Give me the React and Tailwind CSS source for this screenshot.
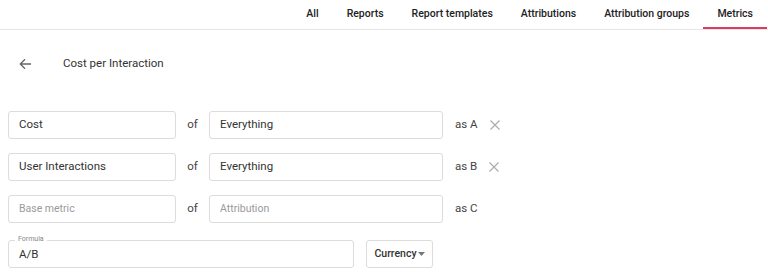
import { useState } from 'react';

const tabs = ['All', 'Reports', 'Report templates', 'Attributions', 'Attribution groups', 'Metrics'];

function CloseIcon() {
  return (
    <svg width="10" height="10" viewBox="0 0 10 10" className="text-[#aaa]">
      <path d="M0.5 0.5L9.5 9.5M9.5 0.5L0.5 9.5" stroke="currentColor" strokeWidth="1.1" />
    </svg>
  );
}

function Field({ value, placeholder, wide }) {
  return (
    <div className={`h-[28px] border border-[#dcdcdc] rounded-[3px] flex items-center px-[10px] bg-white ${wide ? 'w-[234px]' : 'w-[168px]'}`}>
      {value ? (
        <span className="text-[11.5px] text-[#333]">{value}</span>
      ) : (
        <span className="text-[10.5px] text-[#9a9a9a]">{placeholder}</span>
      )}
    </div>
  );
}

export default function App() {
  const [active] = useState('Metrics');

  const rows = [
    { metric: 'Cost', attr: 'Everything', label: 'A', remove: true },
    { metric: 'User Interactions', attr: 'Everything', label: 'B', remove: true },
    { metric: '', attr: '', label: 'C', remove: false },
  ];

  return (
    <div className="w-[768px] h-[279px] bg-white font-['Roboto',sans-serif] text-[#333]">
      {/* Tabs */}
      <div className="h-[30px] border-b border-[#e6e6e6] flex justify-end pr-[1px]">
        {tabs.map((t) => (
          <div
            key={t}
            className={`px-[14px] h-full flex items-center text-[10.5px] font-medium text-[#222] border-b-2 ${
              t === active ? 'border-[#e0395f]' : 'border-transparent'
            }`}
          >
            {t}
          </div>
        ))}
      </div>

      {/* Header */}
      <div className="flex items-center h-[28px] mt-[20px] pl-[19px]">
        <svg width="13" height="12" viewBox="0 0 13 12" className="text-[#666]">
          <path d="M12 6H1.5M6 1.3L1.3 6L6 10.7" stroke="currentColor" strokeWidth="1.3" fill="none" />
        </svg>
        <span className="ml-[31px] text-[11.5px] text-[#333]">Cost per Interaction</span>
      </div>

      {/* Metric rows */}
      <div className="mt-[33px] pl-[8px] flex flex-col gap-[14px]">
        {rows.map((r) => (
          <div key={r.label} className="flex items-center">
            <Field value={r.metric} placeholder="Base metric" />
            <span className="w-[33px] text-center text-[11.5px] text-[#444]">of</span>
            <Field value={r.attr} placeholder="Attribution" wide />
            <span className="ml-[12px] text-[11.5px] text-[#444]">as {r.label}</span>
            {r.remove && (
              <span className="ml-[12px] flex items-center">
                <CloseIcon />
              </span>
            )}
          </div>
        ))}

        {/* Formula */}
        <div className="flex items-center mt-[3px]">
          <div className="relative w-[346px] h-[28px] border border-[#dcdcdc] rounded-[3px] flex items-center px-[10px]">
            <span className="absolute -top-[5px] left-[6px] px-[3px] bg-white text-[7px] text-[#888] leading-none">Formula</span>
            <span className="text-[11.5px] text-[#333] mt-[2px]">A/B</span>
          </div>
          <div className="ml-[12px] w-[67px] h-[28px] border border-[#dcdcdc] rounded-[3px] flex items-center justify-center">
            <span className="text-[10.5px] font-medium text-[#333]">Currency</span>
            <svg width="7" height="4" viewBox="0 0 7 4" className="ml-[1px] text-[#777]">
              <path d="M0 0H7L3.5 4Z" fill="currentColor" />
            </svg>
          </div>
        </div>
      </div>
    </div>
  );
}
